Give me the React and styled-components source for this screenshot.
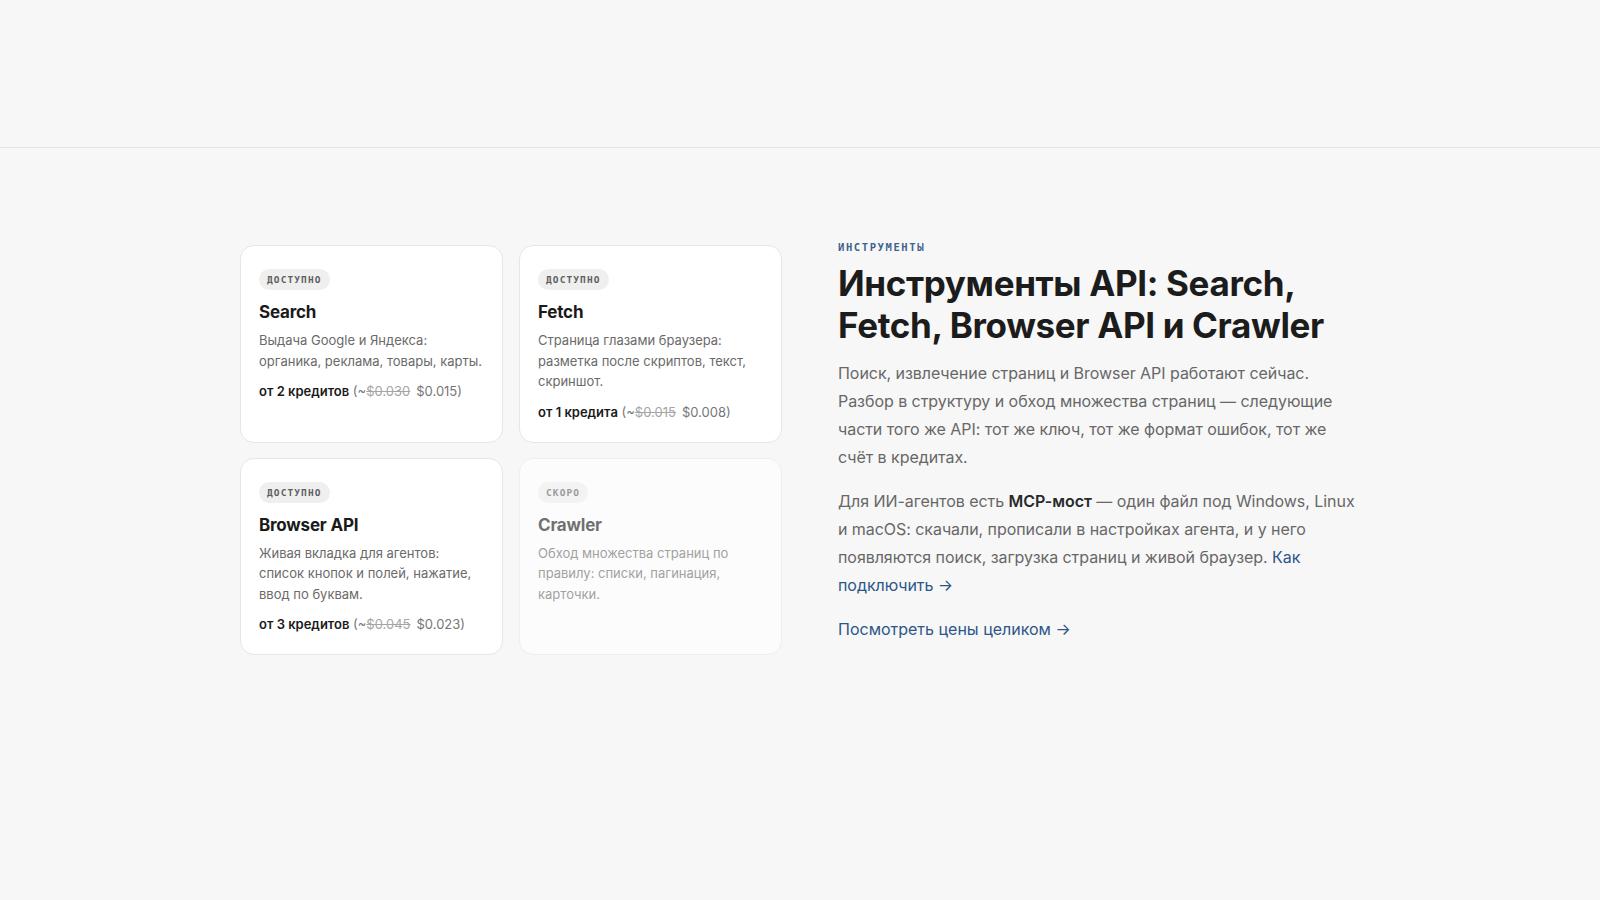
import React from 'react';
import styled, { createGlobalStyle, css } from 'styled-components';

const GlobalStyle = createGlobalStyle`
  * { box-sizing: border-box; }
  body {
    margin: 0;
    background: #f7f7f7;
    font-family: Inter, "Noto Sans", sans-serif;
    color: #1a1a1a;
  }
`

const TopBar = styled.header`
  height: 148px;
  border-bottom: 1px solid #e4e4e4;
`

const Section = styled.section`
  padding: 97px 0 120px;
`

const Container = styled.div`
  width: 1120px;
  margin: 0 auto;
  display: grid;
  grid-template-columns: 542px 1fr;
  column-gap: 56px;
  align-items: start;
`

const CardGrid = styled.div`
  display: grid;
  grid-template-columns: 1fr 1fr;
  gap: 15px 16px;
`

const Card = styled.div`
  background: #fff;
  border: 1px solid #e6e6e6;
  border-radius: 14px;
  padding: 21px 18px 20px;
  min-height: 197px;

  ${p => p.$muted && css`
    background: #fcfcfc;
    border-color: #eeeeee;
    & > * { opacity: 0.62; }
  `}
`

const Badge = styled.span`
  display: inline-block;
  height: 21px;
  line-height: 21px;
  padding: 0 8px;
  border-radius: 11px;
  background: #efefef;
  color: #5e5e5e;
  font-family: "DejaVu Sans Mono", monospace;
  font-weight: 700;
  font-size: 9.5px;
  letter-spacing: 1.1px;
`

const CardTitle = styled.h3`
  margin: 10px 0 6px;
  font-size: 17px;
  font-weight: 700;
  letter-spacing: -0.2px;
  line-height: 24px;
`

const CardText = styled.p`
  margin: 0;
  font-size: 13px;
  line-height: 20.5px;
  color: #6a6a6a;
`

const Price = styled.div`
  margin-top: 10px;
  font-size: 13px;
  line-height: 20px;
  color: #777;

  b {
    color: #1a1a1a;
    font-weight: 600;
  }

  s {
    color: #a5a5a5;
    margin-right: 6px;
  }
`

const Info = styled.div`
  margin-top: -5px;
`

const Eyebrow = styled.div`
  font-family: "DejaVu Sans Mono", monospace;
  font-weight: 700;
  font-size: 10.5px;
  letter-spacing: 1.6px;
  color: #3d6390;
  line-height: 14px;
`

const Heading = styled.h2`
  margin: 8px 0 13px;
  font-size: 35px;
  line-height: 42px;
  font-weight: 700;
  letter-spacing: -0.35px;
  color: #1c1c1c;
`

const Lead = styled.p`
  margin: 0 0 16px;
  font-size: 16px;
  line-height: 28px;
  letter-spacing: -0.05px;
  color: #676767;

  b {
    color: #2a2a2a;
    font-weight: 600;
  }
`

const Link = styled.a`
  color: #2c5689;
  text-decoration: none;
  font-size: 16px;
  line-height: 28px;
`

const tools = [
  {
    status: 'ДОСТУПНО',
    title: 'Search',
    text: 'Выдача Google и Яндекса: органика, реклама, товары, карты.',
    credits: 'от 2 кредитов',
    oldPrice: '$0.030',
    price: '$0.015',
  },
  {
    status: 'ДОСТУПНО',
    title: 'Fetch',
    text: 'Страница глазами браузера: разметка после скриптов, текст, скриншот.',
    credits: 'от 1 кредита',
    oldPrice: '$0.015',
    price: '$0.008',
  },
  {
    status: 'ДОСТУПНО',
    title: 'Browser API',
    text: 'Живая вкладка для агентов: список кнопок и полей, нажатие, ввод по буквам.',
    credits: 'от 3 кредитов',
    oldPrice: '$0.045',
    price: '$0.023',
  },
  {
    status: 'СКОРО',
    title: 'Crawler',
    text: 'Обход множества страниц по правилу: списки, пагинация, карточки.',
    soon: true,
  },
]

const ToolCard = ({ tool }) => (
  <Card $muted={tool.soon}>
    <Badge>{tool.status}</Badge>
    <CardTitle>{tool.title}</CardTitle>
    <CardText>{tool.text}</CardText>
    {tool.credits && (
      <Price>
        <b>{tool.credits}</b> (~<s>{tool.oldPrice}</s>{tool.price})
      </Price>
    )}
  </Card>
)

const App = () => (
  <>
    <GlobalStyle />
    <TopBar />
    <Section>
      <Container>
        <CardGrid>
          {tools.map(t => <ToolCard key={t.title} tool={t} />)}
        </CardGrid>
        <Info>
          <Eyebrow>ИНСТРУМЕНТЫ</Eyebrow>
          <Heading>Инструменты API: Search, Fetch, Browser API и Crawler</Heading>
          <Lead>
            Поиск, извлечение страниц и Browser API работают сейчас. Разбор в структуру и обход
            множества страниц — следующие части того же API: тот же ключ, тот же формат ошибок,
            тот же счёт в кредитах.
          </Lead>
          <Lead>
            Для ИИ-агентов есть <b>MCP-мост</b> — один файл под Windows, Linux и macOS: скачали,
            прописали в настройках агента, и у него появляются поиск, загрузка страниц и живой
            браузер. <Link href="#">Как подключить →</Link>
          </Lead>
          <Link href="#">Посмотреть цены целиком →</Link>
        </Info>
      </Container>
    </Section>
  </>
)

export default App;
